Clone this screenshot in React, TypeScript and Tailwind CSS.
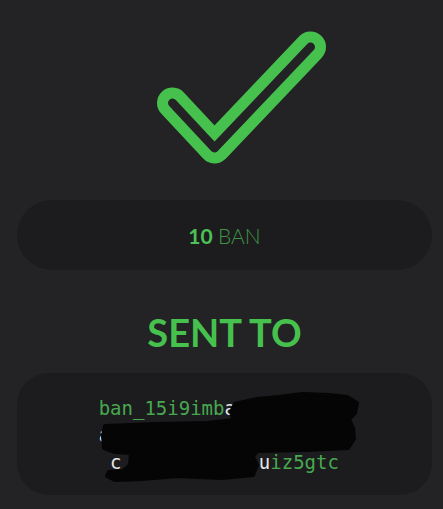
import React from 'react';

const GREEN = '#47c14e';

// address split the way the wallet prints it: green head / tail, plain middle
const lines: { text: string; color: string }[][] = [
  [
    { text: 'ban_15i9imb', color: '#47a84f' },
    { text: 'a8e3wkq1p7h', color: '#e6e6e6' },
  ],
  [{ text: 'a6fzxm4oyn1dr5tjc8usbg', color: '#e6e6e6' }],
  [
    { text: 'c.hq7pwe1k6n:u', color: '#e6e6e6' },
    { text: 'iz5gtc', color: '#47a84f' },
  ],
];

const CheckMark: React.FC = () => {
  const pts = '172,103 214,148 310,47';
  return (
    <svg
      width={240}
      height={170}
      viewBox="104.5 20 240 170"
      className="mx-auto block"
    >
      <polyline
        points={pts}
        fill="none"
        stroke={GREEN}
        strokeWidth={31}
        strokeLinecap="round"
        strokeLinejoin="round"
      />
      <polyline
        points={pts}
        fill="none"
        stroke="#232325"
        strokeWidth={9}
        strokeLinecap="round"
        strokeLinejoin="round"
      />
    </svg>
  );
};

export default function App() {
  return (
    <div className="min-h-[509px] bg-[#232325] pl-[17px] pr-[11px] pt-5" style={{ fontFamily: 'Lato, "Open Sans", sans-serif' }}>
      <CheckMark />

      {/* amount */}
      <div className="mt-[10px] flex h-[70px] items-center justify-center rounded-full bg-[#1c1c1e]">
        <span className="text-[21px] leading-none">
          <span className="font-bold text-[#4cc254]">10</span>{' '}
          <span className="font-light text-[#3f9445]">BAN</span>
        </span>
      </div>

      <h1 className="mt-[43px] text-center text-[38px] font-bold leading-none text-[#47c14e]">
        SENT TO
      </h1>

      {/* address */}
      <div className="relative mt-[22px] h-[122px] rounded-[32px] bg-[#1c1c1e] pt-[22px]">
        <div
          className="text-center text-[19px] leading-[27px]"
          style={{ fontFamily: '"DejaVu Sans Mono", "Liberation Mono", monospace' }}
        >
          {lines.map((line, i) => (
            <div key={i}>
              {line.map((part, j) => (
                <span key={j} style={{ color: part.color }}>
                  {part.text}
                </span>
              ))}
            </div>
          ))}
        </div>

        {/* redaction scribble */}
        <svg className="absolute inset-0" width="100%" height="100%" viewBox="0 0 415 122">
          <path
            d="M218 31 L240 26 L262 24 L285 21 L312 22 L330 24 L340 30 L338 40 L332 46 L336 55 L337 66 L331 75 L290 77 L240 78 L236 84 L240 92 L236 102 L205 105 L160 103 L125 106 L98 107 L90 103 L92 99 L106 98 L113 92 L114 80 L98 79 L87 75 L86 63 L88 53 L140 51 L190 50 L217 47 L214 39 Z"
            fill="#050505"
            stroke="#050505"
            strokeWidth={4}
            strokeLinejoin="round"
          />
        </svg>
      </div>
    </div>
  );
}
